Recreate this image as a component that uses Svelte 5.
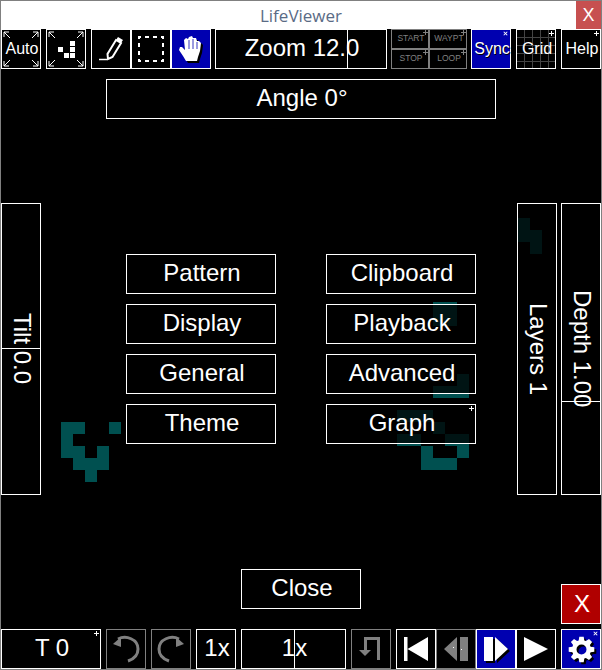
<script lang="ts">
	// cells of the running pattern behind the controls: [x, y, width] in 12px rows
	const cells: number[][] = [
		[61, 422, 24], [109, 422, 12], [61, 434, 12], [61, 446, 24], [97, 446, 12], [73, 458, 36], [85, 470, 12],
		[518, 218, 12], [518, 230, 24], [530, 242, 12],
		[433, 302, 24], [433, 314, 24],
		[457, 374, 12], [433, 386, 36],
		[397, 410, 36], [433, 422, 12], [397, 434, 24], [445, 434, 24],
		[421, 446, 12], [457, 446, 12], [421, 458, 36]
	];

	const menu = ["Pattern", "Clipboard", "Display", "Playback", "General", "Advanced", "Theme", "Graph"];
	const gridLines = [8, 16, 24, 32];

	const hand = "M15 32 L12 27 L8 21 L9 18 L11 18 L14 21 L13 11 L15 9 L17 10 L18 8 L21 7 L22 9 L25 9 L26 12 L28 12 L30 14 L29 22 L27 28 L26 32 Z";
	const corners = "M3 3 L9 9 M3 3 H8 M3 3 V8 M37 3 L31 9 M37 3 H32 M37 3 V8 M3 37 L9 31 M3 37 H8 M3 37 V32 M37 37 L31 31 M37 37 H32 M37 37 V32";

	function gearPath(cx: number, cy: number) {
		let d = "";
		for (let i = 0; i < 8; i++) {
			const a = (i * Math.PI) / 4;
			const pts = [[-0.3, 9.5], [-0.17, 13], [0.17, 13], [0.3, 9.5]];
			for (const [da, r] of pts) {
				const x = cx + r * Math.cos(a + da);
				const y = cy + r * Math.sin(a + da);
				d += (d ? "L" : "M") + x.toFixed(1) + " " + y.toFixed(1) + " ";
			}
		}
		d += "Z M" + (cx + 5) + " " + cy + " A5 5 0 1 0 " + (cx - 5) + " " + cy + " A5 5 0 1 0 " + (cx + 5) + " " + cy + " Z";
		return d;
	}
	const gear = gearPath(20.5, 20.5);
</script>

<div class="viewer">
	<svg class="cells" width="602" height="670" shape-rendering="crispEdges">
		{#each cells as [x, y, w]}
			<rect {x} {y} width={w} height="12" fill="#005050" />
		{/each}
	</svg>

	<header class="title">
		<span class="title-text">LifeViewer</span>
		<span class="title-x">X</span>
	</header>

	<div class="row top">
		<button class="btn small">
			<svg class="icon" viewBox="0 0 40 40"><path d={corners} stroke="#fff" fill="none" /></svg>
			<span>Auto</span>
		</button>
		<button class="btn">
			<svg class="icon" viewBox="0 0 40 40" shape-rendering="crispEdges">
				<path d={corners} stroke="#fff" fill="none" shape-rendering="auto" />
				<rect x="12" y="18" width="5" height="5" fill="#fff" />
				<rect x="18" y="24" width="5" height="5" fill="#fff" />
				<rect x="24" y="12" width="5" height="5" fill="#fff" />
				<rect x="24" y="18" width="5" height="5" fill="#fff" />
				<rect x="24" y="24" width="5" height="5" fill="#fff" />
			</svg>
		</button>
		<div class="group">
			<button class="btn">
				<svg class="icon" viewBox="0 0 40 40">
					<path d="M8 30.5 H16" stroke="#fff" stroke-width="1.5" />
					<path d="M17 30 L16.5 25 L25 11 L30 14 L21.5 28 Z" stroke="#fff" stroke-width="2" fill="none" />
					<path d="M25 11 L27 8 L32 11 L30 14 Z" fill="#fff" />
				</svg>
			</button>
			<button class="btn">
				<svg class="icon" viewBox="0 0 40 40" shape-rendering="crispEdges">
					<rect x="8" y="8" width="24" height="24" fill="none" stroke="#fff" stroke-width="2" stroke-dasharray="4 4" stroke-dashoffset="2" />
				</svg>
			</button>
			<button class="btn blue">
				<svg class="icon" viewBox="0 0 40 40">
					<path d={hand} transform="translate(2 2)" fill="#000" />
					<path d={hand} fill="#fff" />
					<path d="M18 11 V20 M22 10 V20 M26 13 V20" stroke="#0000b0" stroke-width="0.8" />
				</svg>
			</button>
		</div>
		<button class="btn zoom">
			<span class="tick-v" style="left: 131px"></span>
			<span>Zoom 12.0</span>
		</button>
		<div class="way">
			{#each ["START", "WAYPT", "STOP", "LOOP"] as label}
				<button class="btn off tiny"><span>{label}</span><i class="mark"></i></button>
			{/each}
		</div>
		<button class="btn blue small"><span>Sync</span><i class="mark cross"></i></button>
		<button class="btn small">
			<svg class="icon" viewBox="0 0 40 40" shape-rendering="crispEdges">
				{#each gridLines as g}
					<path d="M{g} 1 V39 M1 {g} H39" stroke="#444" />
				{/each}
			</svg>
			<span>Grid</span><i class="mark"></i>
		</button>
		<button class="btn small"><span>Help</span><i class="mark"></i></button>
	</div>

	<button class="btn angle"><span>Angle 0°</span></button>

	<div class="stage">
		<button class="btn side">
			<span class="tick-h" style="top: 144px"></span>
			<span class="vertical">Tilt 0.0</span>
		</button>
		<div class="menu">
			{#each menu as item}
				<button class="btn">
					<span>{item}</span>
					{#if item === "Graph"}<i class="mark"></i>{/if}
				</button>
			{/each}
		</div>
		<button class="btn side layers"><span class="vertical">Layers 1</span></button>
		<button class="btn side depth">
			<span class="tick-h" style="top: 197px"></span>
			<span class="vertical">Depth 1.00</span>
		</button>
	</div>

	<div class="lower">
		<button class="btn close"><span>Close</span></button>
		<button class="btn red"><span>X</span></button>
	</div>

	<div class="row bottom">
		<button class="btn time"><span>T 0</span><i class="mark"></i></button>
		<button class="btn off">
			<svg class="icon" viewBox="0 0 40 40">
				<path d="M12 10 C20 6 32 10 32 20 C32 26 28 30 22 32" stroke="#808080" stroke-width="3" fill="none" />
				<path d="M7 15 L15 8 L15 18 Z" fill="#808080" />
			</svg>
		</button>
		<button class="btn off">
			<svg class="icon" viewBox="0 0 40 40">
				<path d="M28 10 C20 6 8 10 8 20 C8 26 12 30 18 32" stroke="#808080" stroke-width="3" fill="none" />
				<path d="M33 15 L25 8 L25 18 Z" fill="#808080" />
			</svg>
		</button>
		<button class="btn"><span>1x</span></button>
		<button class="btn speed">
			<span class="tick-v" style="left: 52px"></span>
			<span>1x</span>
		</button>
		<button class="btn off">
			<svg class="icon" viewBox="0 0 40 40" shape-rendering="crispEdges">
				<path d="M27 31 V9 H14 V21" stroke="#808080" stroke-width="3" fill="none" />
				<path d="M8 21 H20 L14 27 Z" fill="#808080" shape-rendering="auto" />
			</svg>
		</button>
		<div class="group">
			<button class="btn">
				<svg class="icon" viewBox="0 0 40 40">
					<path d="M8 8 H11.5 V32 H8 Z M11.5 20 L32 8 V32 Z" fill="#fff" />
				</svg>
			</button>
			<button class="btn off">
				<svg class="icon" viewBox="0 0 40 40">
					<path d="M8 20 L21 8 V32 Z M24 8 H32 V32 H24 Z" fill="#808080" />
					<rect x="17" y="18" width="1" height="1" fill="#fff" />
					<rect x="25" y="20" width="1" height="1" fill="#fff" />
				</svg>
			</button>
			<button class="btn blue">
				<svg class="icon" viewBox="0 0 40 40">
					<path d="M8 8 H17 V32 H8 Z M19 8 L32 20 L19 32 Z" fill="#000" transform="translate(2 2)" />
					<path d="M8 8 H17 V32 H8 Z M19 8 L32 20 L19 32 Z" fill="#fff" />
				</svg>
			</button>
			<button class="btn">
				<svg class="icon" viewBox="0 0 40 40">
					<path d="M8 8 L32 20 L8 32 Z" fill="#fff" />
				</svg>
			</button>
		</div>
		<button class="btn blue">
			<svg class="icon" viewBox="0 0 40 40">
				<path d={gear} fill="#000" fill-rule="evenodd" transform="translate(2 2)" />
				<path d={gear} fill="#fff" fill-rule="evenodd" />
			</svg>
			<i class="mark cross"></i>
		</button>
	</div>
</div>

<style>
	:global(body) {
		margin: 0;
		background: #000;
	}
	.viewer {
		position: relative;
		box-sizing: border-box;
		width: 602px;
		height: 670px;
		border: 1px solid #808080;
		background: #000;
		display: flex;
		flex-direction: column;
		font-family: "Liberation Sans", Arial, sans-serif;
		overflow: hidden;
	}
	.cells {
		position: absolute;
		left: -1px;
		top: -1px;
	}
	.title {
		position: relative;
		height: 28px;
		background: #fff;
		display: flex;
		align-items: center;
		justify-content: center;
		flex-shrink: 0;
	}
	.title-text {
		font-family: "Open Sans", sans-serif;
		font-size: 17px;
		color: #5a6b85;
	}
	.title-x {
		position: absolute;
		right: 0;
		top: 0;
		width: 25px;
		height: 28px;
		background: #c75050;
		color: #fff;
		font-size: 18px;
		display: flex;
		align-items: center;
		justify-content: center;
	}
	.row {
		display: flex;
		height: 40px;
		flex-shrink: 0;
		gap: 5px;
	}
	.group {
		display: flex;
	}
	.btn {
		position: relative;
		box-sizing: border-box;
		width: 40px;
		height: 40px;
		padding: 0 0 2px 2px;
		flex-shrink: 0;
		border: 1px solid #fff;
		border-radius: 0;
		background: rgba(0, 0, 0, 0.75);
		color: #fff;
		font-family: inherit;
		font-size: 24px;
		display: flex;
		align-items: center;
		justify-content: center;
		white-space: nowrap;
	}
	.btn span {
		position: relative;
	}
	.small {
		font-size: 16px;
		padding-bottom: 0;
	}
	.blue {
		background: #0000b0;
	}
	.blue span {
		text-shadow: 1px 1px 0 #000;
	}
	.off {
		border-color: #808080;
		color: #808080;
	}
	.icon {
		position: absolute;
		left: -1px;
		top: -1px;
		width: 40px;
		height: 40px;
	}
	.mark {
		position: absolute;
		right: 1px;
		top: 1px;
		width: 5px;
		height: 5px;
		background:
			linear-gradient(currentColor, currentColor) center / 5px 1px no-repeat,
			linear-gradient(currentColor, currentColor) center / 1px 5px no-repeat;
	}
	.cross {
		transform: rotate(45deg);
		right: 2px;
		top: 1px;
	}
	.tick-v {
		position: absolute !important;
		top: 0;
		bottom: 0;
		width: 1px;
		background: #fff;
	}
	.tick-h {
		position: absolute !important;
		left: 0;
		right: 0;
		height: 1px;
		background: #fff;
	}
	.top > .zoom {
		width: 172px;
	}
	.top > .group {
		margin-right: -1px;
	}
	.way {
		display: grid;
		grid-template-columns: 38px 38px;
		grid-template-rows: 20px 20px;
		margin-left: -1px;
		margin-right: -1px;
	}
	.way .btn {
		width: 38px;
		height: 20px;
	}
	.tiny {
		font-size: 8.5px;
	}
	.tiny .mark {
		right: 0;
		top: 0;
	}
	.angle {
		width: 390px;
		margin: 10px 0 0 105px;
	}
	.stage {
		display: flex;
		align-items: flex-start;
		margin-top: 84px;
		height: 292px;
		flex-shrink: 0;
	}
	.side {
		height: 292px;
		padding-bottom: 0;
	}
	.vertical {
		writing-mode: vertical-rl;
	}
	.menu {
		display: grid;
		grid-template-columns: 150px 150px;
		grid-auto-rows: 40px;
		column-gap: 50px;
		row-gap: 10px;
		margin: 51px 0 0 85px;
	}
	.menu .btn {
		width: 150px;
	}
	.layers {
		margin-left: 41px;
	}
	.depth {
		margin-left: 4px;
	}
	.lower {
		display: flex;
		align-items: flex-start;
		height: 134px;
		flex-shrink: 0;
	}
	.close {
		width: 120px;
		margin: 74px 0 0 240px;
	}
	.red {
		margin: 89px 0 0 200px;
		background: #b00000;
		padding-bottom: 0;
	}
	.red span {
		text-shadow: 1px 1px 0 #e00000;
	}
	.time {
		width: 100px;
	}
	.speed {
		width: 105px;
	}
</style>
